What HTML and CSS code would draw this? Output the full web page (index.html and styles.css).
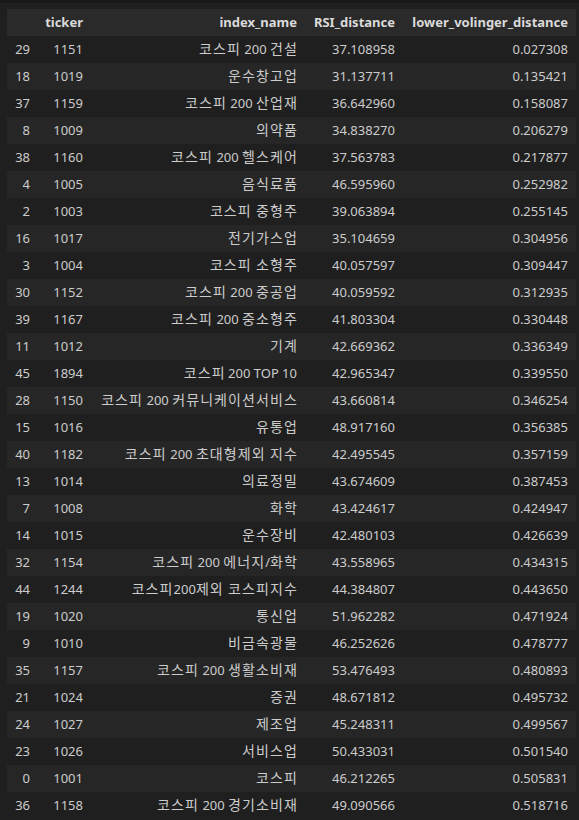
FILE: index.html
```html
<!DOCTYPE html>
<html>
<head>
<meta charset="utf-8">
<link rel="stylesheet" href="styles.css">
</head>
<body>
<div class="topbar"></div>
<div class="wrap">
<table class="df">
<colgroup>
<col class="c-idx"><col class="c-tick"><col class="c-name"><col class="c-rsi"><col class="c-low">
</colgroup>
<thead>
<tr><th></th><th>ticker</th><th>index_name</th><th>RSI_distance</th><th>lower_volinger_distance</th></tr>
</thead>
<tbody>
<tr><td>29</td><td>1151</td><td><span class="ko">코스피</span> 200 <span class="ko">건설</span></td><td>37.108958</td><td>0.027308</td></tr>
<tr><td>18</td><td>1019</td><td><span class="ko">운수창고업</span></td><td>31.137711</td><td>0.135421</td></tr>
<tr><td>37</td><td>1159</td><td><span class="ko">코스피</span> 200 <span class="ko">산업재</span></td><td>36.642960</td><td>0.158087</td></tr>
<tr><td>8</td><td>1009</td><td><span class="ko">의약품</span></td><td>34.838270</td><td>0.206279</td></tr>
<tr><td>38</td><td>1160</td><td><span class="ko">코스피</span> 200 <span class="ko">헬스케어</span></td><td>37.563783</td><td>0.217877</td></tr>
<tr><td>4</td><td>1005</td><td><span class="ko">음식료품</span></td><td>46.595960</td><td>0.252982</td></tr>
<tr><td>2</td><td>1003</td><td><span class="ko">코스피 중형주</span></td><td>39.063894</td><td>0.255145</td></tr>
<tr><td>16</td><td>1017</td><td><span class="ko">전기가스업</span></td><td>35.104659</td><td>0.304956</td></tr>
<tr><td>3</td><td>1004</td><td><span class="ko">코스피 소형주</span></td><td>40.057597</td><td>0.309447</td></tr>
<tr><td>30</td><td>1152</td><td><span class="ko">코스피</span> 200 <span class="ko">중공업</span></td><td>40.059592</td><td>0.312935</td></tr>
<tr><td>39</td><td>1167</td><td><span class="ko">코스피</span> 200 <span class="ko">중소형주</span></td><td>41.803304</td><td>0.330448</td></tr>
<tr><td>11</td><td>1012</td><td><span class="ko">기계</span></td><td>42.669362</td><td>0.336349</td></tr>
<tr><td>45</td><td>1894</td><td><span class="ko">코스피</span> 200 TOP 10</td><td>42.965347</td><td>0.339550</td></tr>
<tr><td>28</td><td>1150</td><td><span class="ko">코스피</span> 200 <span class="ko">커뮤니케이션서비스</span></td><td>43.660814</td><td>0.346254</td></tr>
<tr><td>15</td><td>1016</td><td><span class="ko">유통업</span></td><td>48.917160</td><td>0.356385</td></tr>
<tr><td>40</td><td>1182</td><td><span class="ko">코스피</span> 200 <span class="ko">초대형제외 지수</span></td><td>42.495545</td><td>0.357159</td></tr>
<tr><td>13</td><td>1014</td><td><span class="ko">의료정밀</span></td><td>43.674609</td><td>0.387453</td></tr>
<tr><td>7</td><td>1008</td><td><span class="ko">화학</span></td><td>43.424617</td><td>0.424947</td></tr>
<tr><td>14</td><td>1015</td><td><span class="ko">운수장비</span></td><td>42.480103</td><td>0.426639</td></tr>
<tr><td>32</td><td>1154</td><td><span class="ko">코스피</span> 200 <span class="ko">에너지</span>/<span class="ko">화학</span></td><td>43.558965</td><td>0.434315</td></tr>
<tr><td>44</td><td>1244</td><td><span class="ko">코스피</span>200<span class="ko">제외 코스피지수</span></td><td>44.384807</td><td>0.443650</td></tr>
<tr><td>19</td><td>1020</td><td><span class="ko">통신업</span></td><td>51.962282</td><td>0.471924</td></tr>
<tr><td>9</td><td>1010</td><td><span class="ko">비금속광물</span></td><td>46.252626</td><td>0.478777</td></tr>
<tr><td>35</td><td>1157</td><td><span class="ko">코스피</span> 200 <span class="ko">생활소비재</span></td><td>53.476493</td><td>0.480893</td></tr>
<tr><td>21</td><td>1024</td><td><span class="ko">증권</span></td><td>48.671812</td><td>0.495732</td></tr>
<tr><td>24</td><td>1027</td><td><span class="ko">제조업</span></td><td>45.248311</td><td>0.499567</td></tr>
<tr><td>23</td><td>1026</td><td><span class="ko">서비스업</span></td><td>50.433031</td><td>0.501540</td></tr>
<tr><td>0</td><td>1001</td><td><span class="ko">코스피</span></td><td>46.212265</td><td>0.505831</td></tr>
<tr><td>36</td><td>1158</td><td><span class="ko">코스피</span> 200 <span class="ko">경기소비재</span></td><td>49.090566</td><td>0.518716</td></tr>
</tbody>
</table>
</div>
</body>
</html>
```
FILE: styles.css
```css
html, body {
  margin: 0;
  padding: 0;
  background: #1f1f1f;
}
body {
  width: 579px;
  height: 820px;
  overflow: hidden;
  font-family: "Noto Sans", "Noto Sans CJK KR", sans-serif;
  font-size: 13px;
  color: #cccccc;
}
.topbar {
  height: 3px;
  background: #191919;
}
.wrap {
  padding: 6px 3px 0 7px;
}
.df {
  border-collapse: collapse;
  table-layout: fixed;
  width: 569px;
}
.c-idx { width: 31px; }
.c-tick { width: 53px; }
.c-name { width: 214px; }
.c-rsi { width: 98px; }
.c-low { width: 173px; }
.df tr {
  height: 27px;
}
.df th, .df td {
  height: 27px;
  padding: 0 8px 0 0;
  text-align: right;
  white-space: nowrap;
  vertical-align: middle;
  line-height: 27px;
  overflow: hidden;
}
.df th {
  font-weight: 700;
  color: #dadada;
  background: #2a2a2a;
}
.df tbody tr:nth-child(odd) {
  background: #1f1f1f;
}
.df tbody tr:nth-child(even) {
  background: #262626;
}
.ko {
  font-family: "Noto Sans CJK KR", sans-serif;
  font-size: 14px;
  line-height: 14px;
  letter-spacing: 1.1px;
}
.ko:last-child {
  margin-right: -1px;
}
```
